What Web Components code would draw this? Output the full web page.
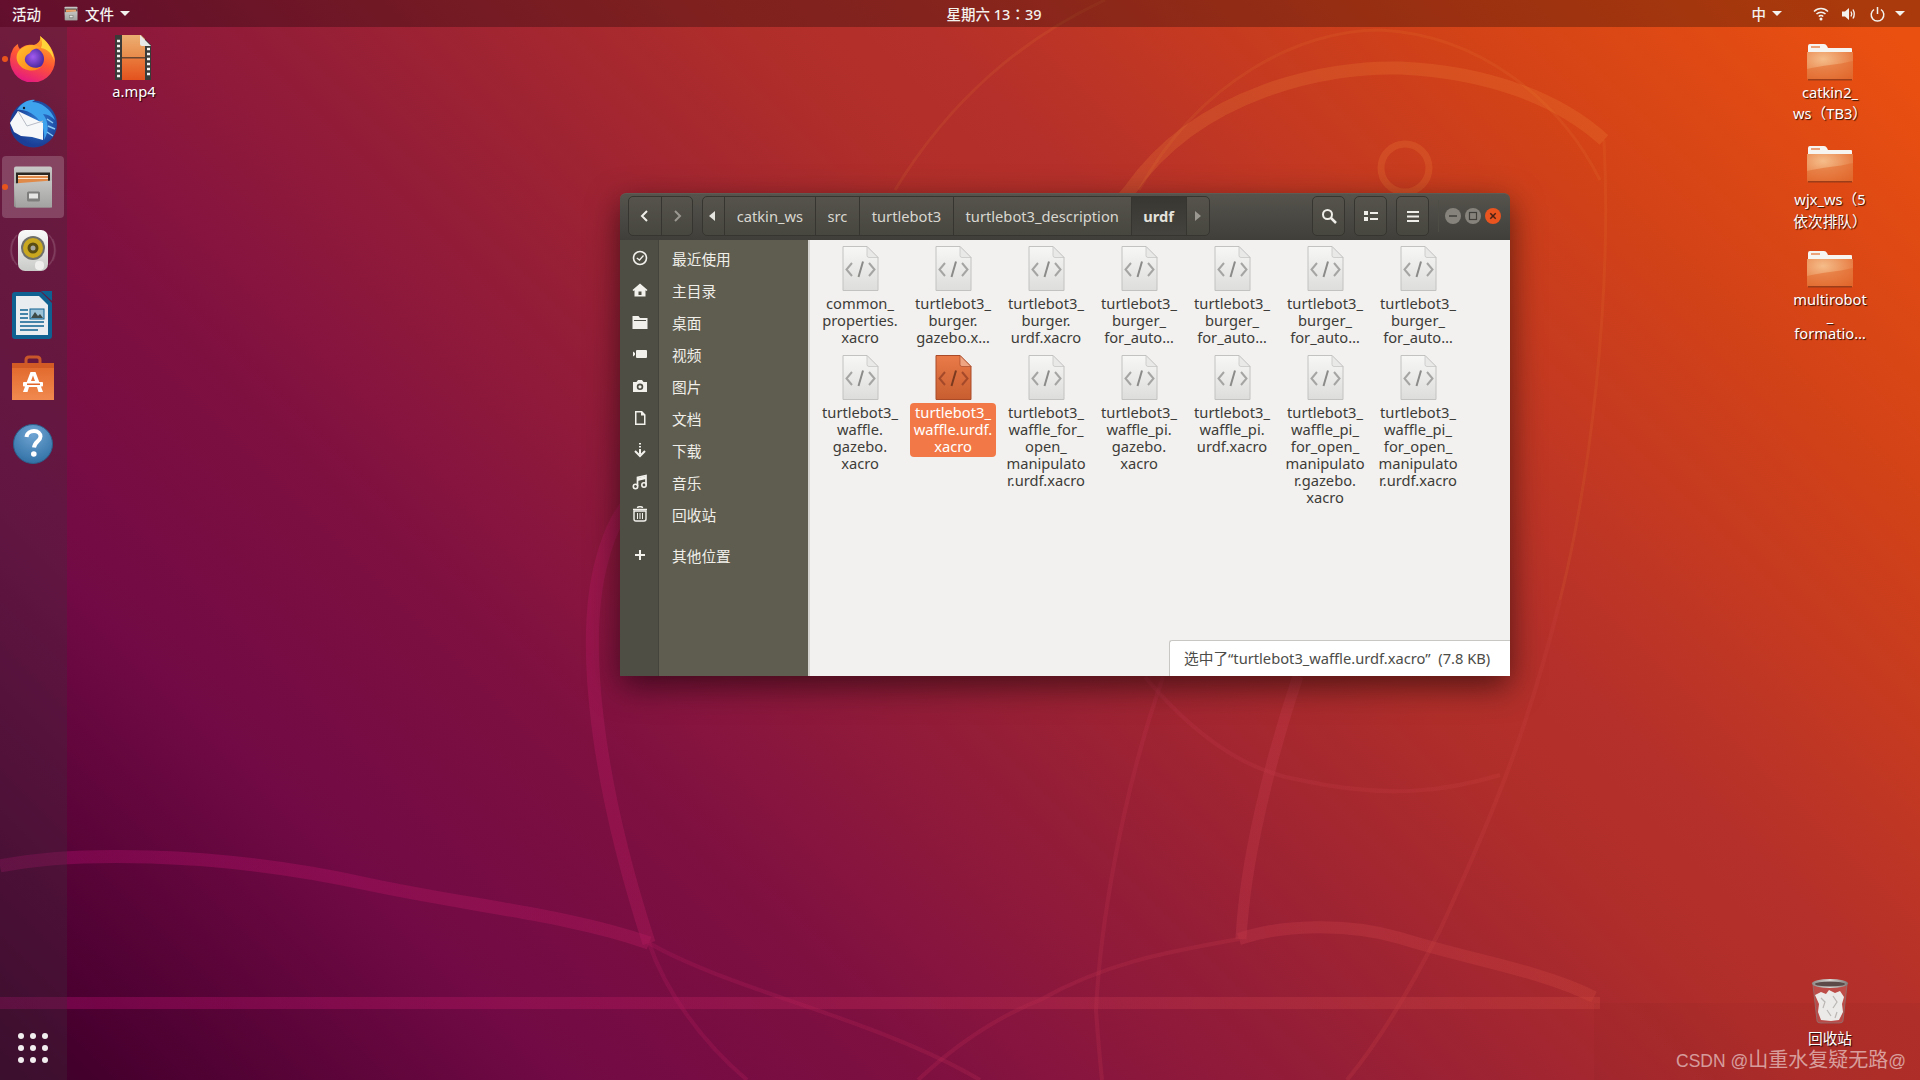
<!DOCTYPE html>
<html lang="zh">
<head>
<meta charset="utf-8">
<title>Ubuntu desktop</title>
<style>
  html, body { margin: 0; padding: 0; height: 100%; overflow: hidden; }
  body { font-family: "Noto Sans", "Noto Sans CJK SC", sans-serif; }
</style>
</head>
<body>
<ub-desktop>
  <ub-topbar slot="top"></ub-topbar>
  <ub-dock slot="dock">
    <dock-item icon="firefox" running></dock-item>
    <dock-item icon="thunderbird"></dock-item>
    <dock-item icon="files" running active></dock-item>
    <dock-item icon="rhythmbox"></dock-item>
    <dock-item icon="writer"></dock-item>
    <dock-item icon="software"></dock-item>
    <dock-item icon="help"></dock-item>
  </ub-dock>

  <desk-icon icon="film" style="left:21px;top:8px;--gap:2px;--shift:2px;">a.mp4</desk-icon>
  <desk-icon icon="folder" style="left:1718px;top:16px;--gap:1px;--lh:21px;">catkin2_<br>ws（TB3）</desk-icon>
  <desk-icon icon="folder" style="left:1718px;top:118px;--gap:5px;--lh:22px;">wjx_ws（5<br>依次排队）</desk-icon>
  <desk-icon icon="folder" style="left:1718px;top:223px;--gap:3px;">multirobot<br>_<br>formatio…</desk-icon>
  <desk-icon icon="trash" style="left:1718px;top:951px;--gap:6px;">回收站</desk-icon>

  <files-window style="left:553px;top:166px;">
    <path-segment slot="path">catkin_ws</path-segment>
    <path-segment slot="path">src</path-segment>
    <path-segment slot="path">turtlebot3</path-segment>
    <path-segment slot="path">turtlebot3_description</path-segment>
    <path-segment slot="path" current>urdf</path-segment>

    <side-row slot="side" icon="recent">最近使用</side-row>
    <side-row slot="side" icon="home">主目录</side-row>
    <side-row slot="side" icon="desktop">桌面</side-row>
    <side-row slot="side" icon="video">视频</side-row>
    <side-row slot="side" icon="photo">图片</side-row>
    <side-row slot="side" icon="doc">文档</side-row>
    <side-row slot="side" icon="download">下载</side-row>
    <side-row slot="side" icon="music">音乐</side-row>
    <side-row slot="side" icon="bin">回收站</side-row>
    <side-row slot="side" icon="plus" style="margin-top:9px;">其他位置</side-row>

    <file-item>common_<br>properties.<br>xacro</file-item>
    <file-item>turtlebot3_<br>burger.<br>gazebo.x…</file-item>
    <file-item>turtlebot3_<br>burger.<br>urdf.xacro</file-item>
    <file-item>turtlebot3_<br>burger_<br>for_auto…</file-item>
    <file-item>turtlebot3_<br>burger_<br>for_auto…</file-item>
    <file-item>turtlebot3_<br>burger_<br>for_auto…</file-item>
    <file-item>turtlebot3_<br>burger_<br>for_auto…</file-item>
    <file-item>turtlebot3_<br>waffle.<br>gazebo.<br>xacro</file-item>
    <file-item selected>turtlebot3_<br>waffle.urdf.<br>xacro</file-item>
    <file-item>turtlebot3_<br>waffle_for_<br>open_<br>manipulato<br>r.urdf.xacro</file-item>
    <file-item>turtlebot3_<br>waffle_pi.<br>gazebo.<br>xacro</file-item>
    <file-item>turtlebot3_<br>waffle_pi.<br>urdf.xacro</file-item>
    <file-item>turtlebot3_<br>waffle_pi_<br>for_open_<br>manipulato<br>r.gazebo.<br>xacro</file-item>
    <file-item>turtlebot3_<br>waffle_pi_<br>for_open_<br>manipulato<br>r.urdf.xacro</file-item>

    <span slot="status">选中了“turtlebot3_waffle.urdf.xacro”  (7.8 KB)</span>
  </files-window>
</ub-desktop>

<script>
const UI_FONT = '"Noto Sans", "Noto Sans CJK SC", sans-serif';

const cabinet = (id) => `
  <defs>
    <linearGradient id="${id}a" x1="0" y1="0" x2="0" y2="1"><stop offset="0" stop-color="#c9c9c7"/><stop offset="1" stop-color="#8f8f8d"/></linearGradient>
    <linearGradient id="${id}b" x1="0" y1="0" x2="0" y2="1"><stop offset="0" stop-color="#c4c4c2"/><stop offset="1" stop-color="#a2a2a0"/></linearGradient>
  </defs>
  <path d="M2 3 Q2 1 4 1 H38 Q40 1 40 3 V40 Q40 42 38 42 H4 Q2 42 2 40 Z" fill="url(#${id}a)"/>
  <rect x="4" y="7" width="34" height="12" fill="#2a2622"/>
  <rect x="6" y="10" width="30" height="9" fill="#e08a4a"/>
  <path d="M6 10 H36 M6 13 H36" stroke="#fbe3cc" stroke-width="1"/>
  <path d="M2 18 L40 15 V42 H4 Z" fill="url(#${id}b)"/>
  <rect x="15" y="26" width="13" height="10" rx="1.5" fill="#7e7e7c"/>
  <rect x="17" y="28" width="9" height="5" fill="#e6e6e4"/>`;

const ICONS = {
  firefox: `<svg width="46" height="46" viewBox="0 0 46 46">
    <defs>
      <linearGradient id="fa" x1=".7" y1="0" x2=".3" y2="1"><stop offset="0" stop-color="#ffb627"/><stop offset=".5" stop-color="#ff5634"/><stop offset="1" stop-color="#e31587"/></linearGradient>
      <radialGradient id="fb" cx=".5" cy=".4"><stop offset="0" stop-color="#a25bf0"/><stop offset="1" stop-color="#4f2ba3"/></radialGradient>
      <linearGradient id="fc" x1="0" y1="0" x2="1" y2="1"><stop offset="0" stop-color="#ffc52e"/><stop offset="1" stop-color="#ff7a1a"/></linearGradient>
    </defs>
    <path d="M30 0 C35 4 43 11 45 23 A22.5 22.5 0 1 1 3 13 C4 11 6 9 8 8 C8 11 9 12 10 13 C13 9 20 8 24 9 C29 7 31 4 30 0 Z" fill="url(#fa)"/>
    <circle cx="23" cy="23" r="11" fill="url(#fb)"/>
    <path d="M12 12 C18 8 26 8 31 12 C25 12 21 14 20 17 C15 19 13 24 17 28 C20 32 27 33 32 30 C27 37 13 36 8 27 C5 21 7 15 12 12 Z" fill="url(#fc)"/>
    <path d="M30 0 C37 6 43 12 44 24 C41 16 37 13 31 12 C33 8 32 4 30 0 Z" fill="#ffd43a"/>
  </svg>`,
  thunderbird: `<svg width="49" height="49" viewBox="0 0 49 49">
    <defs><radialGradient id="ta" cx=".6" cy=".45"><stop offset="0" stop-color="#2f7fd6"/><stop offset="1" stop-color="#1b3f96"/></radialGradient></defs>
    <circle cx="24.500" cy="25" r="23.500" fill="url(#ta)"/>
    <path d="M8 11 C12 4 20 0 26 1 L23 3 C32 3 42 10 46 21 C42 17 38 15 34 15 C39 22 41 31 35 41 C36 31 33 23 26 17 C20 12 13 10 8 11 Z" fill="#3fa2ec"/>
    <path d="M38 20 L44 24 M39 27 L46 30 M38 33 L44 37" stroke="#8ccbf5" stroke-width="1.500"/>
    <path d="M1 24 L9 12 L34 24 L34 41 L23 38 L12 37 L5 33 Z" fill="#f6f7f9"/>
    <path d="M9 12 L18 27 L34 22" fill="none" stroke="#b7bcc6" stroke-width="1"/>
    <circle cx="15" cy="9" r="1.200" fill="#123"/>
  </svg>`,
  files: `<svg width="42" height="44" viewBox="0 0 42 43">${cabinet('c')}</svg>`,
  rhythmbox: `<svg width="48" height="44" viewBox="0 0 48 44">
    <defs><linearGradient id="ra" x1="0" y1="0" x2="0" y2="1"><stop offset="0" stop-color="#fafafa"/><stop offset="1" stop-color="#c9cbc8"/></linearGradient></defs>
    <path d="M8 6 A23 23 0 0 0 8 36 M40 6 A23 23 0 0 1 40 36" fill="none" stroke="#fff" stroke-opacity=".14" stroke-width="1.500"/>
    <path d="M4 10 A26 26 0 0 0 4 32 M44 10 A26 26 0 0 1 44 32" fill="none" stroke="#fff" stroke-opacity=".08" stroke-width="1.500"/>
    <rect x="9" y="1" width="30" height="41" rx="7" fill="url(#ra)"/>
    <circle cx="24" cy="19" r="12" fill="#6f6f6b"/>
    <circle cx="24" cy="19" r="10" fill="#c9a81f"/>
    <circle cx="24" cy="19" r="5.500" fill="#5a4d14"/>
    <circle cx="24" cy="19" r="2.500" fill="#a8a8a0"/>
    <rect x="26" y="32" width="9" height="9" rx="4" fill="#efefed"/>
  </svg>`,
  writer: `<svg width="42" height="49" viewBox="0 0 42 49">
    <path d="M0 4 Q0 1 3 1 H29 L40 12 V45 Q40 48 37 48 H3 Q0 48 0 45 Z" fill="#0f6192"/>
    <path d="M4 5 H27 L36 14 V44 H4 Z" fill="#e9edef"/>
    <path d="M29 0 H40 V10 Z" fill="#0f6192"/>
    <path d="M8 19 H16 M8 23 H16 M8 27 H16 M8 31 H32 M8 35 H32 M8 39 H26" stroke="#0f6192" stroke-width="1.700"/>
    <rect x="18" y="18" width="14" height="10" fill="#9cc2d8" stroke="#0f6192"/>
    <path d="M19 27 L23 21 L26 25 L28 23 L31 27 Z" fill="#3d4a45"/>
  </svg>`,
  software: `<svg style="margin-top:-3px" width="44" height="46" viewBox="0 0 44 46">
    <defs><linearGradient id="sa" x1="0" y1="0" x2="0" y2="1"><stop offset="0" stop-color="#e0662a"/><stop offset="1" stop-color="#f18a4f"/></linearGradient></defs>
    <path d="M15 10 V5 Q15 2 18 2 H26 Q29 2 29 5 V12" fill="none" stroke="#c8562a" stroke-width="3"/>
    <path d="M1 8 H43 V45 H1 Z" fill="url(#sa)"/>
    <path d="M1 8 H43 V13 H1 Z" fill="#d25a25"/>
    <path d="M19.500 17 H24.500 L32 37 H27.500 L26 32 H18 L16.500 37 H12 Z M20 26 H24 L22 20.500 Z" fill="#fff" fill-rule="evenodd"/>
    <rect x="12" y="27" width="20" height="4.500" rx="1" fill="#fff"/>
    <rect x="16" y="28.500" width="13" height="1.500" fill="#e0662a"/>
  </svg>`,
  help: `<svg style="margin-top:2px" width="42" height="42" viewBox="0 0 42 42">
    <defs><radialGradient id="ha" cx=".5" cy=".25" r=".85"><stop offset="0" stop-color="#6fa5d4"/><stop offset="1" stop-color="#2a6a9f"/></radialGradient></defs>
    <circle cx="21" cy="21" r="19.500" fill="url(#ha)" stroke="#2c5f8b"/>
    <path d="M14.500 14 C15 9.500 19 8 22 8 C26 8 28.500 10.500 28.500 13.500 C28.500 18 22.500 18.500 22 24.500" fill="none" stroke="#fff" stroke-width="4"/>
    <circle cx="21.800" cy="31" r="2.800" fill="#fff"/>
  </svg>`,
  film: `<svg width="37" height="46" viewBox="0 0 37 46">
    <defs><linearGradient id="fi" x1="0" y1="0" x2="0" y2="1"><stop offset="0" stop-color="#ecae72"/><stop offset=".5" stop-color="#e88b4a"/><stop offset=".52" stop-color="#e97a3c"/><stop offset="1" stop-color="#e4521c"/></linearGradient></defs>
    <path d="M0 0 H26 L36 10 V45 H0 Z" fill="#3a3a38"/>
    <path d="M7 0 H26 L30 4 V45 H7 Z" fill="url(#fi)"/>
    <rect x="7" y="22" width="23" height="1.500" fill="#6a4530"/>
    <path d="M25 0 L36 11 H27 Q25 11 25 9 Z" fill="#e8e8e6"/>
    <path d="M2 6 H5 M2 11 H5 M2 16 H5 M2 21 H5 M2 26 H5 M2 31 H5 M2 36 H5 M2 41 H5 M32 14 H35 M32 19 H35 M32 24 H35 M32 29 H35 M32 34 H35 M32 39 H35" stroke="#f2f2f0" stroke-width="2.500"/>
  </svg>`,
  folder: `<svg width="46" height="38" viewBox="0 0 46 38">
    <defs>
      <radialGradient id="fo" cx=".35" cy=".25" r=".9"><stop offset="0" stop-color="#f5bd8a"/><stop offset=".6" stop-color="#ea8a52"/><stop offset="1" stop-color="#e0652c"/></radialGradient>
    </defs>
    <path d="M1 9 V3 Q1 1 3 1 H17 Q19 1 20 3 L21 5 H44 Q45 5 45 6 V12 H1 Z" fill="#f7f5f2"/>
    <rect x="4" y="3" width="9" height="2" fill="#eda37a"/>
    <path d="M0 9 H46 V36 Q46 37 45 37 H2 Q0 37 0 35 Z" fill="url(#fo)"/>
    <path d="M0 26 C16 22 30 22 46 18 V36 Q46 37 45 37 H2 Q0 37 0 35 Z" fill="#e26a2e" fill-opacity=".55"/>
    <rect x="1" y="36" width="44" height="1.500" fill="#9a3d18"/>
  </svg>`,
  trash: `<svg width="38" height="46" viewBox="0 0 38 46">
    <defs><linearGradient id="tr" x1="0" y1="0" x2="1" y2="0"><stop offset="0" stop-color="#8d8a88"/><stop offset=".5" stop-color="#d8d5d2"/><stop offset="1" stop-color="#7f7b79"/></linearGradient></defs>
    <path d="M2 7 L6 43 Q6 45 10 45 H28 Q32 45 32 43 L36 7 Z" fill="#fff" fill-opacity=".14" stroke="#8a7a78" stroke-width=".7"/>
    <path d="M4 17 L10 14 L15 16 L18 12 L24 15 L29 13 L33 19 L31 26 L32 34 L28 42 L20 43 L10 42 L7 34 L8 26 Z" fill="#eceae8"/>
    <path d="M10 20 L14 24 L12 30 M22 18 L26 24 L22 30 M16 32 L20 38 M26 34 L24 40" stroke="#b9b6b4" stroke-width="1.200" fill="none"/>
    <ellipse cx="19" cy="5.500" rx="18" ry="4.500" fill="url(#tr)"/>
    <ellipse cx="19" cy="6" rx="15" ry="2.500" fill="#5b4a48"/>
  </svg>`,
  // sidebar symbols
  recent: `<svg width="16" height="16" viewBox="0 0 16 16"><circle cx="8" cy="8" r="6.500" fill="none" stroke="#f2f1ec" stroke-width="1.600"/><path d="M4.800 8 L7.500 10 L11.500 5.500" fill="none" stroke="#f2f1ec" stroke-width="1.300"/></svg>`,
  home: `<svg width="16" height="16" viewBox="0 0 16 16"><path d="M0.500 8 L8 1.500 L15.500 8 L14.500 9 L13.500 8.200 V14.500 H2.500 V8.200 L1.500 9 Z M6.500 9.500 V13 H9.500 V9.500 Z" fill="#f2f1ec" fill-rule="evenodd"/></svg>`,
  desktop: `<svg width="16" height="16" viewBox="0 0 16 16"><path d="M0.500 2 H6.500 L8 4 H15.500 V15 H0.500 Z" fill="#f2f1ec"/><path d="M2 6 H14 V7 H2 Z" fill="#4e4d45"/></svg>`,
  video: `<svg width="16" height="16" viewBox="0 0 16 16"><path d="M1 5.500 L3 7 V9 L1 10.500 Z" fill="#f2f1ec"/><rect x="4" y="4" width="11" height="8" rx="1" fill="#f2f1ec"/></svg>`,
  photo: `<svg width="16" height="16" viewBox="0 0 16 16"><path d="M1 4 H4.500 L6 2 H10 L11.500 4 H15 V14 H1 Z M8 5.500 A3.200 3.200 0 1 0 8 12 A3.200 3.200 0 1 0 8 5.500 Z M8 7.200 A1.600 1.600 0 1 1 8 10.400 A1.600 1.600 0 1 1 8 7.200 Z" fill="#f2f1ec" fill-rule="evenodd"/></svg>`,
  doc: `<svg width="16" height="16" viewBox="0 0 16 16"><path d="M3 1 H10 L13.500 4.500 V15 H3 Z M4.500 2.500 V13.500 H12 V5.500 H9 V2.500 Z" fill="#f2f1ec" fill-rule="evenodd"/></svg>`,
  download: `<svg width="16" height="16" viewBox="0 0 16 16"><path d="M8 1 V2.500 M8 4 V5.500 M8 7 V12" stroke="#f2f1ec" stroke-width="2" fill="none"/><path d="M3 9 L8 14 L13 9" stroke="#f2f1ec" stroke-width="2" fill="none"/></svg>`,
  music: `<svg width="16" height="16" viewBox="0 0 16 16"><path d="M5.500 12 V3.500 L14 1.500 V10.500" fill="none" stroke="#f2f1ec" stroke-width="1.700"/><path d="M5.500 4 L14 2 V5 L5.500 7 Z" fill="#f2f1ec"/><circle cx="3.500" cy="12.500" r="2.200" fill="none" stroke="#f2f1ec" stroke-width="1.600"/><circle cx="12" cy="11" r="2.200" fill="none" stroke="#f2f1ec" stroke-width="1.600"/></svg>`,
  bin: `<svg width="16" height="16" viewBox="0 0 16 16"><path d="M5.500 2 Q5.500 0.800 7 0.800 H9 Q10.500 0.800 10.500 2 M1 3.500 H15" stroke="#f2f1ec" stroke-width="1.500" fill="none"/><path d="M2 5 H14 V13 Q14 15 12 15 H4 Q2 15 2 13 Z" fill="none" stroke="#f2f1ec" stroke-width="1.400"/><path d="M5.500 7 V13 M8 7 V13 M10.500 7 V13" stroke="#f2f1ec" stroke-width="1"/></svg>`,
  plus: `<svg width="16" height="16" viewBox="0 0 16 16"><path d="M3 8 H13 M8 3 V13" stroke="#f2f1ec" stroke-width="2"/></svg>`
};

class UbDesktop extends HTMLElement {
  constructor() {
    super();
    this.attachShadow({ mode: 'open' });
    this.shadowRoot.innerHTML = `
      <style>
        :host {
          display: grid;
          grid-template-rows: 27px 1fr;
          grid-template-columns: 67px 1fr;
          position: relative;
          width: 1920px;
          height: 1080px;
          overflow: hidden;
          background: linear-gradient(45deg, #3a0028 0%, #4a0030 5%, #720a45 19%, #7e1040 31%, #88153e 36%, #921c38 43%, #b02e2a 60%, #b5302a 66%, #d24218 83%, #ea5010 98%);
        }
        svg.lines { position: absolute; inset: 0; }
        .top { grid-column: 1 / 3; position: relative; }
        .dock { position: relative; }
        .canvas { position: relative; }
      </style>
      <svg class="lines" width="1920" height="1080" viewBox="0 0 1920 1080" fill="none">
        <defs>
          <linearGradient id="ln" gradientUnits="userSpaceOnUse" x1="0" y1="0" x2="1920" y2="0">
            <stop offset="0" stop-color="#a80a68"/>
            <stop offset=".35" stop-color="#b01a5a"/>
            <stop offset=".68" stop-color="#c03844"/>
            <stop offset="1" stop-color="#d04a30"/>
          </linearGradient>
        </defs>
        <g stroke="url(#ln)" stroke-opacity=".42">
          <path d="M0 1003 H1594 V997" stroke-width="12" fill="none"/>
          <path d="M0 866 C70 852 210 850 367 884 C470 906 570 915 649 943" stroke-width="13"/>
          <path d="M649 943 C596 780 580 640 602 560 C610 530 620 510 640 490" stroke-width="13"/>
          <path d="M1298 676 C1270 760 1245 860 1241 939" stroke-width="11"/>
          <path d="M1239 939 C1280 925 1347 922 1400 938 C1470 960 1540 970 1594 997" stroke-width="12"/>
          <g stroke-width="4" stroke-opacity=".28">
            <path d="M1560 600 C1530 720 1500 800 1440 930 C1410 990 1380 1040 1347 1080"/>
            <path d="M1145 677 C1190 730 1240 770 1300 780 C1390 800 1450 790 1500 775"/>
            <path d="M1163 677 C1120 800 1100 930 1096 1010 C1098 1040 1100 1060 1102 1080"/>
            <path d="M649 943 C665 990 700 1040 747 1080"/>
            <path d="M649 943 C730 990 880 1020 980 1080"/>
            <path d="M1239 939 C1180 950 1110 960 1040 1000 C990 1020 950 1050 918 1080"/>
          </g>
        </g>
        <g stroke="#f08a3c" stroke-opacity=".22">
          <path d="M640 490 C750 400 1050 290 1130 190 C1200 90 1330 66 1400 68 C1490 72 1560 100 1604 140" stroke-width="13"/>
          <circle cx="1405" cy="168" r="24" stroke-width="7"/>
          <g stroke-width="3" stroke-opacity=".12">
            <path d="M1604 140 C1612 300 1590 480 1560 600"/>
            <path d="M1139 190 C1200 80 1300 30 1380 30 C1480 35 1560 100 1600 180"/>
            <path d="M895 190 C950 100 1020 40 1105 0"/>
          </g>
        </g>
        <rect x="1594" y="1003" width="326" height="77" fill="#000" fill-opacity=".025"/>
      </svg>
      <div class="top"><slot name="top"></slot></div>
      <div class="dock"><slot name="dock"></slot></div>
      <div class="canvas"><slot></slot></div>
    `;
  }
}

class UbTopbar extends HTMLElement {
  constructor() {
    super();
    this.attachShadow({ mode: 'open' });
    this.shadowRoot.innerHTML = `
      <style>
        :host {
          display: grid;
          grid-template-columns: 1fr auto 1fr;
          align-items: center;
          height: 27px;
          background: rgba(0, 0, 0, .27);
          color: #f4f2ee;
          font: 500 14.500px "Noto Sans", "Noto Sans CJK SC", sans-serif;
        }
        .left, .right { display: flex; align-items: center; }
        .left { padding-left: 12px; }
        .right { justify-content: flex-end; }
        .app { display: flex; align-items: center; margin-left: 23px; }
        .app svg { margin-right: 7px; }
        .arrow { width: 0; height: 0; border: 5px solid transparent; border-top-color: #f4f2ee; border-bottom: 0; }
        .app .arrow { margin-left: 6px; }
        .clock { margin-left: 68px; white-space: pre; }
        .clock span { font-family: "Noto Sans CJK JP", sans-serif; }
        .ime { margin-right: 6px; }
        .right svg { display: block; }
      </style>
      <div class="left">
        <span>活动</span>
        <span class="app">
          <svg width="14" height="15" viewBox="0 0 42 43">${cabinet('t')}</svg>
          <span>文件</span><i class="arrow"></i>
        </span>
      </div>
      <div class="clock">星期六 13<span lang="ja">：</span>39</div>
      <div class="right">
        <span class="ime">中</span><i class="arrow"></i>
        <svg style="margin-left:31px" width="16" height="16" viewBox="0 0 16 16" fill="none" stroke="#f4f2ee" stroke-width="1.500"><path d="M1 5.500 C5 1.500 11 1.500 15 5.500 M3.500 8 C6 5.500 10 5.500 12.500 8 M5.800 10.500 C7 9.300 9 9.300 10.200 10.500"/><circle cx="8" cy="13" r="1.500" fill="#f4f2ee" stroke="none"/></svg>
        <svg style="margin-left:12px" width="16" height="16" viewBox="0 0 16 16" fill="none" stroke="#f4f2ee" stroke-width="1.400"><path d="M1 5.500 H4 L8 2 V14 L4 10.500 H1 Z" fill="#f4f2ee" stroke="none"/><path d="M10 5.500 Q11.500 8 10 10.500 M12 3.500 Q14.500 8 12 12.500"/></svg>
        <svg style="margin-left:13px" width="15" height="16" viewBox="0 0 15 16" fill="none" stroke="#f4f2ee" stroke-width="1.500"><path d="M4 3.500 A6.300 6.300 0 1 0 11 3.500 M7.500 1 V8"/></svg>
        <i class="arrow" style="margin-left:10px;margin-right:15px"></i>
      </div>
    `;
  }
}

class UbDock extends HTMLElement {
  constructor() {
    super();
    this.attachShadow({ mode: 'open' });
    this.shadowRoot.innerHTML = `
      <style>
        :host {
          display: flex;
          flex-direction: column;
          box-sizing: border-box;
          width: 67px;
          height: 1053px;
          background: rgba(62, 48, 58, .32);
        }
        .grid {
          margin-top: auto;
          margin-bottom: 17px;
          margin-left: 18px;
          align-self: flex-start;
          display: grid;
          grid-template-columns: repeat(3, 6px);
          gap: 6px;
        }
        .grid i { width: 6px; height: 6px; border-radius: 50%; background: #f2eef0; }
      </style>
      <slot></slot>
      <div class="grid">${'<i></i>'.repeat(9)}</div>
    `;
  }
}

class DockItem extends HTMLElement {
  constructor() {
    super();
    this.attachShadow({ mode: 'open' });
    this.shadowRoot.innerHTML = `
      <style>
        :host { display: flex; align-items: center; justify-content: center; position: relative; height: 64px; padding-right: 1px; }
        :host([active])::before {
          content: ""; position: absolute; left: 2px; right: 3px; top: 1px; bottom: 1px;
          border-radius: 4px; background: rgba(255, 255, 255, .19);
        }
        :host([running])::after {
          content: ""; position: absolute; left: 2px; top: 29px; width: 6px; height: 6px;
          border-radius: 50%; background: #e9541c;
        }
        svg { position: relative; display: block; }
      </style>
      ${ICONS[this.getAttribute('icon')]}
    `;
  }
}

class DeskIcon extends HTMLElement {
  constructor() {
    super();
    this.attachShadow({ mode: 'open' });
    this.shadowRoot.innerHTML = `
      <style>
        :host {
          position: absolute;
          display: flex;
          flex-direction: column;
          align-items: center;
          width: 90px;
          color: #fff;
          font: 14.700px/var(--lh, 17px) ${UI_FONT};
          text-align: center;
          white-space: nowrap;
          text-shadow: 1px 1px 1px rgba(0, 0, 0, .8);
        }
        svg { display: block; }
        .label { margin-top: var(--gap, 5px); margin-left: var(--shift, 0); }
      </style>
      ${ICONS[this.getAttribute('icon')]}
      <div class="label"><slot></slot></div>
    `;
  }
}

class FilesWindow extends HTMLElement {
  constructor() {
    super();
    this.attachShadow({ mode: 'open' });
    const chevron = (d) => `<svg width="12" height="14" viewBox="0 0 12 14" fill="none" stroke-width="2"><path d="${d}"/></svg>`;
    this.shadowRoot.innerHTML = `
      <style>
        :host {
          position: absolute;
          display: flex;
          flex-direction: column;
          width: 890px;
          height: 483px;
          border-radius: 6px 6px 0 0;
          box-shadow: 0 10px 32px rgba(0, 0, 0, .55);
          font: 14.700px/17px ${UI_FONT};
        }
        header {
          display: flex;
          align-items: center;
          box-sizing: border-box;
          height: 47px;
          padding: 0 0 2px 8px;
          border-radius: 6px 6px 0 0;
          background: linear-gradient(#55534c, #403f3a);
          border-top: 1px solid #5d5b53;
        }
        .group {
          display: flex;
          box-sizing: border-box;
          height: 40px;
          border: 1px solid #36352f;
          border-radius: 5px;
          background: linear-gradient(#55534c, #47463f);
        }
        .btn { display: flex; align-items: center; justify-content: center; box-sizing: border-box; height: 100%; }
        .nav .btn { width: 31.500px; }
        .nav .btn + .btn { border-left: 1px solid #36352f; }
        .path { margin-left: 9px; }
        .tri { width: 22px; }
        .tri i { width: 0; height: 0; border: 5px solid transparent; border-left: 0; border-right: 6px solid #e6e4de; margin-right: 4px; }
        .tri.r i { border-right: 0; border-left: 6px solid #9a9890; margin-right: 0; }
        .tri:first-child { border-right: 1px solid #36352f; }
        .tools { display: flex; margin-left: auto; }
        .tools .group { margin-left: 9px; width: 33px; justify-content: center; align-items: center; }
        .wm { display: flex; align-items: center; gap: 4px; margin-left: 9px; padding-left: 6px; padding-right: 9px; height: 32px; border-left: 1px solid #4d4c45; }
        .wm svg { display: block; }
        .body { display: flex; flex: 1; min-height: 0; }
        .side {
          box-sizing: border-box;
          width: 190px;
          padding-top: 2px;
          background: linear-gradient(90deg, #4e4e45 38px, #45443c 38px, #45443c 39px, #5f5d50 39px, #5f5d50 188px, #d4d3cf 188px);
        }
        .content { position: relative; flex: 1; background: #f2f1ef; }
        .grid {
          display: grid;
          grid-template-columns: repeat(7, 93px);
          align-content: start;
          row-gap: 7px;
          padding: 6px 0 0 3.500px;
        }
        .status {
          position: absolute;
          right: 0;
          bottom: 0;
          display: flex;
          align-items: center;
          box-sizing: border-box;
          width: 341px;
          height: 36px;
          padding-left: 14px;
          background: #fff;
          border-top: 1px solid #c8c7c4;
          border-left: 1px solid #c8c7c4;
          border-top-left-radius: 3px;
          color: #4c4c48;
          white-space: pre;
        }
      </style>
      <header>
        <div class="group nav">
          <div class="btn">${chevron('M8 2 L3 7 L8 12').replace('<path', '<path stroke="#f0eee8"')}</div>
          <div class="btn">${chevron('M4 2 L9 7 L4 12').replace('<path', '<path stroke="#9a9890"')}</div>
        </div>
        <div class="group path">
          <div class="btn tri"><i></i></div>
          <slot name="path"></slot>
          <div class="btn tri r"><i></i></div>
        </div>
        <div class="tools">
          <div class="group"><svg width="16" height="16" viewBox="0 0 16 16" fill="none" stroke="#f0eee8" stroke-width="2"><circle cx="6.500" cy="6.500" r="4.500"/><path d="M10 10 L15 15" stroke-width="2.500"/></svg></div>
          <div class="group"><svg width="14" height="10" viewBox="0 0 14 10" fill="#f0eee8"><rect x="0" y="0" width="4" height="4"/><rect x="0" y="6" width="4" height="4"/><rect x="6" y="1" width="8" height="2"/><rect x="6" y="7" width="8" height="2"/></svg></div>
          <div class="group"><svg width="12" height="11" viewBox="0 0 12 11" fill="#f0eee8"><rect width="12" height="2"/><rect y="4.500" width="12" height="2"/><rect y="9" width="12" height="2"/></svg></div>
        </div>
        <div class="wm">
          <svg width="16" height="16" viewBox="0 0 16 16"><circle cx="8" cy="8" r="8" fill="#85837c"/><path d="M4 8 H12" stroke="#403f3a" stroke-width="1.500"/></svg>
          <svg width="16" height="16" viewBox="0 0 16 16"><circle cx="8" cy="8" r="8" fill="#85837c"/><rect x="4.500" y="4.500" width="7" height="7" fill="none" stroke="#403f3a" stroke-width="1.200"/></svg>
          <svg width="16" height="16" viewBox="0 0 16 16"><circle cx="8" cy="8" r="8" fill="#e9541f"/><path d="M5.300 5.300 L10.700 10.700 M10.700 5.300 L5.300 10.700" stroke="#4a2014" stroke-width="1.500"/></svg>
        </div>
      </header>
      <div class="body">
        <nav class="side"><slot name="side"></slot></nav>
        <div class="content">
          <div class="grid"><slot></slot></div>
          <div class="status"><slot name="status"></slot></div>
        </div>
      </div>
    `;
  }
}

class PathSegment extends HTMLElement {
  constructor() {
    super();
    this.attachShadow({ mode: 'open' });
    this.shadowRoot.innerHTML = `
      <style>
        :host {
          display: flex;
          align-items: center;
          height: 100%;
          padding: 0 11.700px;
          border-right: 1px solid #36352f;
          color: #d9d7d0;
          font: 14.700px ${UI_FONT};
          white-space: nowrap;
        }
        :host([current]) {
          font-weight: 700;
          color: #e4e2dc;
          background: linear-gradient(#383732, #44433d);
        }
      </style>
      <slot></slot>
    `;
  }
}

class SideRow extends HTMLElement {
  constructor() {
    super();
    this.attachShadow({ mode: 'open' });
    this.shadowRoot.innerHTML = `
      <style>
        :host {
          display: flex;
          align-items: center;
          height: 32px;
          color: #f0efe9;
          font: 14.700px ${UI_FONT};
        }
        .ic { display: flex; justify-content: center; width: 39px; }
        .ic svg { display: block; }
        .tx { margin-left: 13px; }
      </style>
      <span class="ic">${ICONS[this.getAttribute('icon')]}</span>
      <span class="tx"><slot></slot></span>
    `;
  }
}

class FileItem extends HTMLElement {
  constructor() {
    super();
    this.attachShadow({ mode: 'open' });
    const on = this.hasAttribute('selected');
    const code = on ? '#a4492a' : '#a5a5a3';
    this.shadowRoot.innerHTML = `
      <style>
        :host {
          display: flex;
          flex-direction: column;
          align-items: center;
          color: #3d3c38;
          text-align: center;
          white-space: nowrap;
        }
        svg { display: block; }
        .label { box-sizing: border-box; width: 86px; margin-top: 3px; padding: .500px 0 2.500px; border-radius: 4px; }
        :host([selected]) .label { background: #f27947; color: #fff; }
      </style>
      <svg width="37" height="45" viewBox="0 0 37 45">
        <defs><linearGradient id="pg" x1="0" y1="0" x2="0" y2="1">
          <stop offset="0" stop-color="${on ? '#e97a48' : '#f7f7f6'}"/><stop offset="1" stop-color="${on ? '#c85e30' : '#dddddb'}"/>
        </linearGradient></defs>
        <path d="M1 .5 H25 L36 11.500 V44.500 H1 Z" fill="url(#pg)" stroke="${on ? '#a94a28' : '#c2c2c0'}"/>
        <path d="M25 .5 L36 11.500 H27 Q25 11.500 25 9.500 Z" fill="${on ? '#f0a582' : '#e9e9e8'}" stroke="${on ? '#a94a28' : '#c2c2c0'}" stroke-width=".7"/>
        <path d="M10 17 L4.500 23.500 L10 30 M27 17 L32.500 23.500 L27 30" fill="none" stroke="${code}" stroke-width="2"/>
        <path d="M21 15.500 L16.500 31" fill="none" stroke="${on ? '#7a3a20' : '#8b8b89'}" stroke-width="2"/>
      </svg>
      <div class="label"><slot></slot></div>
    `;
  }
}

customElements.define('ub-desktop', UbDesktop);
customElements.define('ub-topbar', UbTopbar);
customElements.define('ub-dock', UbDock);
customElements.define('dock-item', DockItem);
customElements.define('desk-icon', DeskIcon);
customElements.define('files-window', FilesWindow);
customElements.define('path-segment', PathSegment);
customElements.define('side-row', SideRow);
customElements.define('file-item', FileItem);
</script>
<span style="position:absolute;left:1676px;top:1049px;color:rgba(255,255,255,.55);font:17.500px/22px 'Liberation Sans','Noto Sans CJK SC',sans-serif;white-space:nowrap;">CSDN @<span style="font-size:20px">山重水复疑无路</span>@</span>
</body>
</html>
